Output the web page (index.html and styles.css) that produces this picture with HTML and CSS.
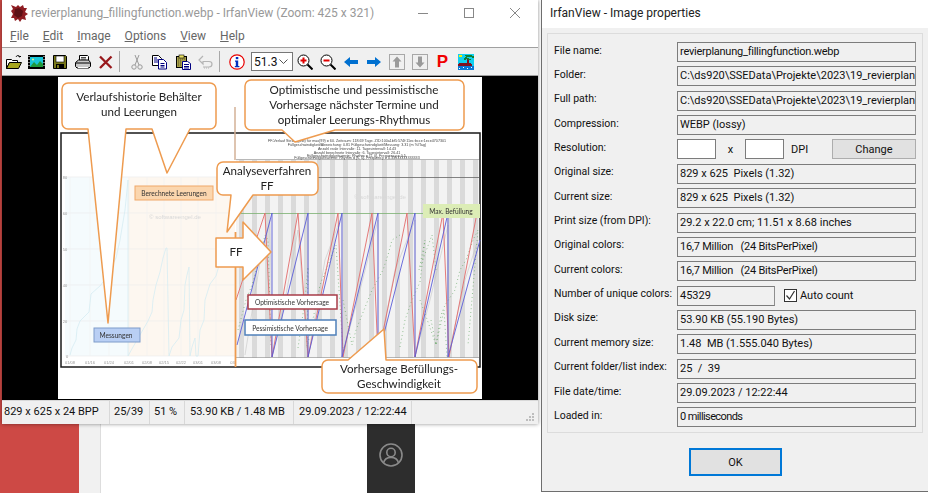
FILE: index.html
```html
<!DOCTYPE html>
<html lang="de">
<head>
  <meta charset="UTF-8">
  <title>IrfanView - Image properties</title>
  <link rel="stylesheet" href="styles.css">
</head>
<body>
  <div class="desktop">
    <div class="bg-red"></div>
    <div class="bg-gray"></div>
    <div class="bg-white">
      <div class="side-panel">
        <svg class="user-icon" width="24" height="24" viewBox="0 0 24 24" fill="none" stroke="#8a8a8a" stroke-width="1.6">
          <circle cx="12" cy="12" r="11"/>
          <circle cx="12" cy="9.5" r="4.2"/>
          <path d="M4.5 20c1-4 4-5.6 7.500-5.600s6.500 1.600 7.500 5.600"/>
        </svg>
        <svg class="user-icon" width="24" height="24" viewBox="0 0 24 24" fill="#8a8a8a">
          <circle cx="12" cy="6" r="4"/>
        </svg>
      </div>
    </div>

    <!-- viewer window -->
    <div class="window viewer">
      <div class="titlebar">
        <svg class="app-icon" width="18" height="18" viewBox="0 0 18 18">
          <path d="M1 1l5 2 2-2 2 2 3-2 1 3 3 0-2 4 3 2-3 2 1 4-4-1-2 3-2-3-3 2-1-3-3 0 2-4-2-3 2-2z" fill="#8e1c22"/>
          <path d="M5 5l4-1 4 3-1 5-4 2-4-3z" fill="#5c1015"/>
        </svg>
        <span class="title-text">revierplanung_fillingfunction.webp - IrfanView (Zoom: 425 x 321)</span>
        <div class="win-buttons">
          <svg width="46" height="16" viewBox="0 0 46 16"><path d="M18 8.500h10" stroke="#888"/></svg>
          <svg width="46" height="16" viewBox="0 0 46 16"><rect x="18.500" y="3.500" width="9" height="9" fill="none" stroke="#888"/></svg>
          <svg width="46" height="16" viewBox="0 0 46 16"><path d="M18 3l10 10M28 3l-10 10" stroke="#888"/></svg>
        </div>
      </div>
      <div class="menubar">
        <span class="menu-item"><u>F</u>ile</span>
        <span class="menu-item"><u>E</u>dit</span>
        <span class="menu-item"><u>I</u>mage</span>
        <span class="menu-item"><u>O</u>ptions</span>
        <span class="menu-item"><u>V</u>iew</span>
        <span class="menu-item"><u>H</u>elp</span>
      </div>
      <div class="toolbar">
        <span class="tool"><svg width="16" height="16" viewBox="0 0 16 16"><path d="M.5 5.500h5l1 1h5v2h-8l-3 6z" fill="#fff" stroke="#000"/><path d="M3.500 8.500h12l-3 6H.5z" fill="#a8a820" stroke="#000"/><path d="M10 3c1-2 3-2 4 0M14 3l1-1M14 3l-1.500-.5" fill="none" stroke="#000"/></svg></span>
        <span class="tool"><svg width="17" height="16" viewBox="0 0 17 16"><rect y="1" width="17" height="14" fill="#000"/><rect x="2" y="3" width="13" height="10" fill="#19c6d8"/><path d="M2 13l4-5 3 3 3-4 3 3v3z" fill="#1f9a3c"/><circle cx="5" cy="5.500" r="1" fill="#e8f080"/><path d="M1 2v12M16 2v12" stroke="#fff" stroke-dasharray="1 2"/></svg></span>
        <span class="tool"><svg width="16" height="16" viewBox="0 0 16 16"><path d="M1.500 1.500h12l1 1v12h-13z" fill="#7a7a1a" stroke="#000"/><rect x="4" y="2" width="8" height="6" fill="#fff" stroke="#000" stroke-width=".6"/><rect x="4" y="10" width="8" height="4.500" fill="#000"/><rect x="5" y="11" width="2" height="3" fill="#7a7a1a"/></svg></span>
        <span class="tool"><svg width="16" height="16" viewBox="0 0 16 16"><path d="M4.500 6.500v-5h8l1 1v4" fill="#fff" stroke="#000"/><path d="M.5 8.500l3-2.500h10l2 2.500v4l-1.500 1.500h-12l-1.500-1.500z" fill="#c8c8c8" stroke="#000"/><path d="M1 9h14" stroke="#000"/><path d="M3 13.500h10" stroke="#fff"/><path d="M6 3.500h5M6 5h5" stroke="#000" stroke-width=".7"/></svg></span>
        <span class="tool"><svg width="16" height="16" viewBox="0 0 16 16"><path d="M2 2.500l11.500 11.500M13.500 2.500l-11.500 11.500" stroke="#98181c" stroke-width="2.300"/></svg></span>
        <span class="tool-sep"></span>
        <span class="tool"><svg width="16" height="16" viewBox="0 0 16 16" fill="none" stroke="#9a9a9a"><circle cx="5" cy="13" r="2.200"/><circle cx="11" cy="13" r="2.200"/><path d="M6 11l4-10M10 11l-4-10"/></svg></span>
        <span class="tool"><svg width="16" height="16" viewBox="0 0 16 16"><path d="M.5 1.500h6l3 3v7h-9z" fill="#fff" stroke="#000"/><path d="M6.500 5.500h5l3 3v6.500h-8z" fill="#fff" stroke="#000080"/><path d="M8.500 9.500h4M8.500 11.500h4M8.500 13h4M2 4h3M2 6h4M2 8h4" stroke="#000080"/></svg></span>
        <span class="tool"><svg width="16" height="16" viewBox="0 0 16 16"><rect x="1.500" y="2.500" width="10" height="11" fill="#a8a04a" stroke="#000"/><rect x="4" y="1" width="5" height="3" fill="#e8e060" stroke="#000" stroke-width=".6"/><path d="M3 5h7M3 7h4M3 9h4M3 11h4" stroke="#5a5420" stroke-dasharray="1 1"/><path d="M7.500 7.500h5l3 2v6h-8z" fill="#fff" stroke="#000080"/><path d="M9 10.500h5M9 12.500h5M9 14h5" stroke="#000080"/></svg></span>
        <span class="tool"><svg width="16" height="16" viewBox="0 0 16 16" fill="none" stroke="#b4b4b4"><path d="M5 2L1 6l4 4V7.500h6c2 0 3 1 3 2.500s-1 3-3 3H5" stroke-width="1.200"/><path d="M6 14h6" stroke="#b4b4b4" stroke-dasharray="1 1"/></svg></span>
        <span class="tool-sep"></span>
        <span class="tool"><svg width="16" height="16" viewBox="0 0 16 16"><circle cx="8" cy="8" r="7.200" fill="#fff" stroke="#e80000" stroke-width="1.200"/><rect x="6.800" y="3" width="2.500" height="2.200" fill="#0030c0"/><path d="M6 6.500h3.200v5.500h1.200v1.200H5.800V12h1V7.700H6z" fill="#0030c0"/></svg></span>
        <span class="zoom-combo"><span>51.3</span>
          <svg width="9" height="6" viewBox="0 0 9 6"><path d="M.5 .5l4 4 4-4" fill="none" stroke="#555"/></svg>
        </span>
        <span class="tool"><svg width="16" height="16" viewBox="0 0 16 16"><circle cx="6.500" cy="6.500" r="5.500" fill="#fff" stroke="#000"/><path d="M3.500 6.500h6M6.500 3.500v6" stroke="#e00000" stroke-width="2"/><path d="M10.500 10.500l5 5" stroke="#000" stroke-width="2"/></svg></span>
        <span class="tool"><svg width="16" height="16" viewBox="0 0 16 16"><circle cx="6.500" cy="6.500" r="5.500" fill="#fff" stroke="#000"/><path d="M3.500 6.500h6" stroke="#e00000" stroke-width="2"/><path d="M10.500 10.500l5 5" stroke="#000" stroke-width="2"/></svg></span>
        <span class="tool"><svg width="16" height="16" viewBox="0 0 16 16"><path d="M1 8l6-5v3h8v4H7v3z" fill="#0070d0"/></svg></span>
        <span class="tool"><svg width="16" height="16" viewBox="0 0 16 16"><path d="M15 8L9 3v3H1v4h8v3z" fill="#0070d0"/></svg></span>
        <span class="tool"><svg width="16" height="16" viewBox="0 0 16 16"><rect x=".5" y=".5" width="15" height="15" fill="none" stroke="#a8a8a8"/><path d="M8 2.500l4.500 5H10v6H6v-6H3.500z" fill="#9a9a9a"/></svg></span>
        <span class="tool"><svg width="16" height="16" viewBox="0 0 16 16"><rect x=".5" y=".5" width="15" height="15" fill="none" stroke="#a8a8a8"/><path d="M8 13.500l4.500-5H10v-6H6v6H3.500z" fill="#9a9a9a"/></svg></span>
        <span class="tool tool-p">P</span>
        <span class="tool"><svg width="16" height="16" viewBox="0 0 16 16" shape-rendering="crispEdges"><rect width="16" height="12" fill="#10d0f0"/><rect y="12" width="16" height="4" fill="#0878d8"/><rect x="1" y="1" width="3" height="2" fill="#f8f000"/><path d="M1 9h12v1h1v2H0v-2h1zM9 4h2v5H9z" fill="#801020"/><path d="M7 1h7v1h2v2h-2V3H9v1h2v1h2v1h-3V5H8v1H6V4h1V3h1V2H7z" fill="#108030"/><path d="M1 14h1v1H1zM5 13h1v1H5zM9 14h1v1H9zM13 13h1v1h-1z" fill="#fff"/></svg></span>
      </div>

      <div class="image-area">
        <svg class="slide" width="424" height="322" viewBox="58 77 424 322">
          <defs>
            <pattern id="stripes" x="238" width="13" height="10" patternUnits="userSpaceOnUse">
              <rect width="13" height="10" fill="#f3f3f3"/>
              <rect x="1" width="5" height="10" fill="#dadada"/>
            </pattern>
          </defs>

          <!-- chart frame -->
          <rect x="61" y="133" width="419" height="234" fill="#fff" stroke="#1a1a1a" stroke-width="1.500"/>
          <rect x="65" y="177" width="63" height="179" fill="#f5fbfd"/>
          <rect x="128" y="177" width="107" height="179" fill="#fdf7f0"/>
          <path d="M65 177h170M65 213h170M65 249h170M65 285h170M65 321h170M65 356h170" stroke="#ececec" stroke-width=".7"/>
          <path d="M70 177v179M90 177v179M109 177v179M129 177v179M147 177v179M164 177v179M181 177v179M198 177v179M216 177v179" stroke="#f2f2f2" stroke-width=".6"/>
          <g class="axis-label">
            <text x="65" y="179">80</text><text x="65" y="215">60</text><text x="65" y="251">50</text><text x="65" y="287">40</text><text x="65" y="323">20</text><text x="67" y="358">0</text>
            <text x="70" y="364">01/08</text><text x="90" y="364">01/16</text><text x="109" y="364">01/24</text><text x="129" y="364">02/01</text><text x="147" y="364">02/08</text><text x="164" y="364">02/15</text><text x="181" y="364">02/22</text><text x="198" y="364">03/01</text><text x="216" y="364">03/08</text><text x="233" y="364">03/</text>
          </g>
          <polyline class="hist-line" points="70,355 72,348 76,340 77,329 80,321 89,312 91,294 101,285 106,277 116,258 120,240 125,210 128,180 128,356 133,347 148,321 152,312 153,300 156,285 160,272 163,258 166,248 167,248 169,356 172,347 179,338 181,320 184,310 185,285 187,275 189,267 190,356 192,347 195,338 196,356 198,356 200,330 204,320 205,300 210,284 216,276 220,262 228,250 233,240"/>

          <!-- right chart -->
          <rect x="236" y="160" width="243" height="198" fill="url(#stripes)"/>
          <path d="M236 159.500h243" stroke="#9a9a9a" stroke-width=".7"/>
          <path d="M236 177.500h243" stroke="#666" stroke-width=".8"/>
          <path d="M236 213.500h243" stroke="#7ab070" stroke-width=".8"/>
          <path d="M236 357.500h243" stroke="#999" stroke-width=".7"/>
          <g class="tiny-head">
            <text x="357" y="142">FF-Verlauf Stelle (gelb) für max(99) = 60. Zeitraum: 118.69 Tage. ZID:100a1bf5:574f:11ec:bcce:1ece4707301</text>
            <text x="357" y="146">Füllgeschwindigkeit/Abweichung: 0.81 Füllgeschwindigkeit/Messung: 3.31 (m %/Tag)</text>
            <text x="357" y="150">Anzahl reale Intervalle: 11. Tagesintervall: 14.43</text>
            <text x="357" y="153.500">Anzahl berechnete Intervalle: 6. Tagesintervall: 26.41</text>
            <text x="357" y="156.500">Füllgeschwindigkeitswerte: Rhythm = [1, 0]. Frequency = 0.5,</text>
            <text x="357" y="159">Füllgeschwindigkeitswerte: Rhythm = [1, 0]. Frequency = 0.33333333333333</text>
          </g>
          <text class="watermark" x="175" y="219">© softwareengel.de</text>
          <text class="watermark" x="380" y="199">© softwareengel.de</text>
          <g class="ghost-lines">
            <polyline points="245,355 262,250 270,220 272,357 285,300 298,230 308,357 325,260 342,215 342,357 360,290 378,220 378,357 395,270 415,220 415,357 430,300 448,225 448,357 465,280 478,240"/>
          </g>
          <g class="green-dots">
            <polyline points="238,330 246,300 252,285 259,260 265,235 268,240 271,345"/>
            <polyline points="298,348 305,300 308,267 307,348 320,285 326,270 336,245 343,350"/>
            <polyline points="343,300 352,345 356,330 368,300 372,290 383,270 388,255 392,240 400,235"/>
            <polyline points="400,347 405,320 412,300 420,282 425,240 419,270 432,235 436,270"/>
            <polyline points="431,320 436,345 441,315 445,305 455,290 460,270 466,260 473,240 478,230 468,345"/>
            <polyline points="420,300 428,322 436,345 444,310 447,357"/>
          </g>
          <path class="pred-red" d="M236 300L265 213L272 357L298 213L308 357L338 213L343 357L372 213L378 357L407 213L415 357L443 213L449 357L477 213"/>
          <path class="pred-blue" d="M237 345L272 213V357L308 213V357L342 213V357L378 213V357L415 213V357L448 213V357L480 240"/>

          <!-- boxes on the chart -->
          <rect x="135" y="186" width="78" height="14" fill="#fbd6ae" stroke="#f0a868"/>
          <text class="box-label" x="174" y="196">Berechnete Leerungen</text>
          <rect x="94" y="328" width="46" height="14" fill="#b9cff4" stroke="#7f9cca"/>
          <text class="box-label" x="116" y="338">Messungen</text>
          <rect x="423" y="204" width="57" height="14" fill="#dcedb6"/>
          <text class="box-label" x="451" y="214">Max. Befüllung</text>
          <rect x="248" y="295" width="89" height="14" fill="#fff" stroke="#a83c48" stroke-width="1.500"/>
          <text class="box-label" x="292" y="305">Optimistische Vorhersage</text>
          <rect x="245" y="320" width="91" height="15" fill="#fff" stroke="#4f80ba" stroke-width="1.500"/>
          <text class="box-label" x="290" y="331">Pessimistische Vorhersage</text>

          <!-- callouts -->
          <path class="axis-bar" d="M235 107V160"/>
          <path class="axis-bar-strong" d="M235.500 232V367"/>
          <path class="callout" d="M68 83H210a6 6 0 0 1 6 6V123a6 6 0 0 1-6 6H190L167 173L152 129H126L108 323L88 129H68a6 6 0 0 1-6-6V89a6 6 0 0 1 6-6z"/>
          <text class="callout-text" x="139" y="101">Verlaufshistorie Behälter</text>
          <text class="callout-text" x="139" y="116">und Leerungen</text>
          <path class="callout" d="M251 80H458a6 6 0 0 1 6 6V124a6 6 0 0 1-6 6H335L295 142L282 130H251a6 6 0 0 1-6-6V86a6 6 0 0 1 6-6z"/>
          <text class="callout-text" x="354" y="94">Optimistische und pessimistische</text>
          <text class="callout-text" x="354" y="109">Vorhersage nächster Termine und</text>
          <text class="callout-text" x="354" y="124">optimaler Leerungs-Rhythmus</text>
          <path class="callout" d="M223 162H312a6 6 0 0 1 6 6V189a6 6 0 0 1-6 6H253L227 232L231 195H223a6 6 0 0 1-6-6V168a6 6 0 0 1 6-6z"/>
          <text class="callout-text" x="267" y="175">Analyseverfahren</text>
          <text class="callout-text" x="267" y="190">FF</text>
          <path class="callout" d="M216 238H243V222L271 252L243 280V267H216z"/>
          <text class="callout-text" x="236" y="256">FF</text>
          <path class="callout" d="M328 360H348L384 329L386 360H471a6 6 0 0 1 6 6V387a6 6 0 0 1-6 6H328a6 6 0 0 1-6-6V366a6 6 0 0 1 6-6z"/>
          <text class="callout-text" x="399" y="373">Vorhersage Befüllungs-</text>
          <text class="callout-text" x="399" y="388">Geschwindigkeit</text>
        </svg>
      </div>

      <div class="statusbar">
        <span class="status-cell cell-size">829 x 625 x 24 BPP</span>
        <span class="status-cell cell-index">25/39</span>
        <span class="status-cell cell-zoom">51 %</span>
        <span class="status-cell cell-mem">53.90 KB / 1.48 MB</span>
        <span class="status-cell cell-date">29.09.2023 / 12:22:44</span>
        <svg class="grip" width="9" height="9" viewBox="0 0 9 9" fill="#bdbdbd"><rect x="6" width="2" height="2"/><rect x="3" y="3" width="2" height="2"/><rect x="6" y="3" width="2" height="2"/><rect y="6" width="2" height="2"/><rect x="3" y="6" width="2" height="2"/><rect x="6" y="6" width="2" height="2"/></svg>
      </div>
    </div>

    <!-- properties dialog -->
    <div class="window dialog">
      <div class="dialog-title">IrfanView - Image properties</div>
      <div class="dialog-body">
        <div class="group">
          <div class="row"><span class="label">File name:</span><span class="field tight">revierplanung_fillingfunction.webp</span></div>
          <div class="row"><span class="label">Folder:</span><span class="field">C:\ds920\SSEData\Projekte\2023\19_revierplan</span></div>
          <div class="row"><span class="label">Full path:</span><span class="field">C:\ds920\SSEData\Projekte\2023\19_revierplan</span></div>
          <div class="row"><span class="label">Compression:</span><span class="field">WEBP (lossy)</span></div>
          <div class="row">
            <span class="label">Resolution:</span>
            <span class="input"></span><span class="times">x</span><span class="input"></span><span class="dpi">DPI</span>
            <span class="btn btn-change">Change</span>
          </div>
          <div class="row"><span class="label">Original size:</span><span class="field">829 x 625&nbsp; Pixels (1.32)</span></div>
          <div class="row"><span class="label">Current size:</span><span class="field">829 x 625&nbsp; Pixels (1.32)</span></div>
          <div class="row"><span class="label">Print size (from DPI):</span><span class="field">29.2 x 22.0 cm; 11.51 x 8.68 inches</span></div>
          <div class="row"><span class="label">Original colors:</span><span class="field tight">16,7 Million&nbsp;&nbsp; (24 BitsPerPixel)</span></div>
          <div class="row"><span class="label">Current colors:</span><span class="field tight">16,7 Million&nbsp;&nbsp; (24 BitsPerPixel)</span></div>
          <div class="row">
            <span class="label">Number of unique colors:</span>
            <span class="field field-short">45329</span>
            <span class="check"><svg width="11" height="11" viewBox="0 0 11 11"><path d="M1.500 5.500l3 3.500 5-8" fill="none" stroke="#333" stroke-width="1.200"/></svg></span>
            <span class="check-label">Auto count</span>
          </div>
          <div class="row"><span class="label">Disk size:</span><span class="field">53.90 KB (55.190 Bytes)</span></div>
          <div class="row"><span class="label">Current memory size:</span><span class="field">1.48&nbsp; MB (1.555.040 Bytes)</span></div>
          <div class="row"><span class="label">Current folder/list index:</span><span class="field">25&nbsp; /&nbsp; 39</span></div>
          <div class="row"><span class="label">File date/time:</span><span class="field">29.09.2023 / 12:22:44</span></div>
          <div class="row"><span class="label">Loaded in:</span><span class="field tighter">0 milliseconds</span></div>
        </div>
        <div class="dialog-actions"><span class="btn btn-ok">OK</span></div>
      </div>
    </div>
  </div>
</body>
</html>
```

FILE: styles.css
```css
html, body {
  margin: 0;
  height: 100%;
  overflow: hidden;
}
body {
  font-family: Roboto, Arial, sans-serif;
  font-size: 11px;
  color: #111;
  background-color: #fff;
}
.desktop {
  position: relative;
  display: flex;
  width: 928px;
  height: 493px;
  overflow: hidden;
}
.bg-red {
  width: 79px;
  background-color: #cd4945;
}
.bg-gray {
  width: 21px;
  background-color: #f1f1f1;
  border-right: 1px solid #ddd;
}
.bg-white {
  flex: 1;
  padding-left: 266px;
  background-color: #fff;
}
.side-panel {
  display: flex;
  flex-direction: column;
  align-items: center;
  gap: 24px;
  width: 48px;
  height: 100%;
  padding-top: 443px;
  box-sizing: border-box;
  background-color: #2d2d2d;
}
.user-icon {
  flex: none;
}

.window {
  position: absolute;
  top: 0;
  box-sizing: border-box;
  display: flex;
  flex-direction: column;
}

/* viewer */
.viewer {
  left: 2px;
  width: 536px;
  height: 424px;
  background-color: #fff;
  box-shadow: 0 0 4px rgba(0, 0, 0, 0.45);
}
.titlebar {
  display: flex;
  align-items: center;
  height: 25px;
  padding-left: 8px;
}
.app-icon {
  margin-right: 3px;
}
.title-text {
  font-size: 12px;
  color: #999;
  white-space: nowrap;
}
.win-buttons {
  display: flex;
  margin-left: auto;
}
.menubar {
  display: flex;
  align-items: center;
  height: 22px;
  padding-left: 8px;
  font-size: 12px;
  color: #666;
}
.menu-item {
  margin-right: 14px;
}
.toolbar {
  display: flex;
  align-items: center;
  height: 29px;
  box-sizing: border-box;
  background-color: #f0f0f0;
  border-top: 1px solid #a0a0a0;
  border-bottom: 1px solid #a0a0a0;
}
.tool {
  display: flex;
  justify-content: center;
  width: 23px;
  flex-shrink: 0;
}
.tool-p {
  font-family: "Liberation Sans", sans-serif;
  font-size: 17px;
  font-weight: bold;
  line-height: 16px;
  color: #f00000;
}
.tool-sep {
  width: 1px;
  height: 21px;
  margin: 0 5px 0 2px;
  background-color: #a8a8a8;
}
.zoom-combo {
  display: flex;
  align-items: center;
  justify-content: space-between;
  box-sizing: border-box;
  width: 42px;
  height: 19px;
  margin-left: 3px;
  padding: 0 4px 0 2px;
  font-size: 12px;
  background-color: #fff;
  border: 1px solid #777;
}
.image-area {
  display: flex;
  justify-content: center;
  height: 324px;
  padding-top: 1px;
  box-sizing: border-box;
  background-color: #000;
}
.slide {
  display: block;
  background-color: #fff;
  filter: blur(0.5px);
}
.statusbar {
  display: flex;
  align-items: center;
  position: relative;
  flex: 1;
  font-size: 11px;
  color: #111;
  background-color: #f0f0f0;
  border-top: 1px solid #d8d8d8;
}
.status-cell {
  box-sizing: border-box;
  height: 100%;
  line-height: 22px;
  padding-left: 2px;
  border-right: 1px solid #d8d8d8;
  white-space: nowrap;
}
.cell-size { width: 108px; }
.cell-index { width: 40px; padding-left: 4px; }
.cell-zoom { width: 35px; padding-left: 4px; }
.cell-mem { width: 109px; padding-left: 5px; }
.cell-date { width: 118px; padding-left: 5px; }
.grip {
  position: absolute;
  right: 3px;
  bottom: 2px;
}

/* slide contents */
.callout {
  fill: #fff;
  stroke: #ee9b4f;
  stroke-width: 1.500;
  stroke-linejoin: round;
}
.callout-text {
  font-family: Lato, sans-serif;
  font-size: 11.600px;
  fill: #222;
  text-anchor: middle;
}
.box-label {
  font-family: Lato, sans-serif;
  font-size: 6.600px;
  fill: #333;
  text-anchor: middle;
}
.axis-label {
  font-family: "Liberation Sans", sans-serif;
  font-size: 4px;
  fill: #999;
  text-anchor: middle;
}
.tiny-head {
  font-family: "Liberation Sans", sans-serif;
  font-size: 3.700px;
  fill: #444;
  text-anchor: middle;
}
.watermark {
  font-family: "Liberation Sans", sans-serif;
  font-size: 6px;
  fill: #d8d8d8;
  text-anchor: middle;
}
.hist-line {
  fill: none;
  stroke: #d5ecf2;
  stroke-width: 0.800;
}
.ghost-lines polyline {
  fill: none;
  stroke: #bdbdbd;
  stroke-width: 0.500;
}
.green-dots polyline {
  fill: none;
  stroke: #4c9a4c;
  stroke-width: 0.700;
  stroke-dasharray: 0.800 3;
}
.pred-red {
  fill: none;
  stroke: #e26c6c;
  stroke-width: 0.900;
}
.pred-blue {
  fill: none;
  stroke: #5a5cd8;
  stroke-width: 0.900;
}
.axis-bar {
  fill: none;
  stroke: #d3b196;
  stroke-width: 1.500;
}
.axis-bar-strong {
  fill: none;
  stroke: #ee9b4f;
  stroke-width: 1.800;
}

/* dialog */
.dialog {
  left: 541px;
  width: 390px;
  height: 492px;
  background-color: #f0f0f0;
  border-left: 1px solid #6e6e6e;
  border-bottom: 1px solid #6e6e6e;
}
.dialog-title {
  height: 28px;
  line-height: 27px;
  padding-left: 8px;
  font-size: 12px;
  color: #222;
  background-color: #fff;
}
.dialog-body {
  padding: 5px 0 0 5px;
}
.group {
  display: flex;
  flex-direction: column;
  gap: 4.370px;
  box-sizing: border-box;
  width: 376px;
  height: 400px;
  padding: 8px 6px 0 6px;
  border: 1px solid #dcdcdc;
}
.row {
  display: flex;
  align-items: center;
  height: 20px;
  flex-shrink: 0;
}
.label {
  flex: none;
  width: 123px;
  margin-bottom: 4px;
  font-size: 10.500px;
  white-space: nowrap;
}
.field {
  flex: 1;
  box-sizing: border-box;
  min-width: 0;
  height: 20px;
  line-height: 18px;
  padding-left: 2px;
  white-space: nowrap;
  border: 1px solid #7c7c7c;
  border-right-color: #8e8e8e;
}
.tight {
  letter-spacing: -0.25px;
}
.tighter {
  letter-spacing: -0.6px;
}
.field-short {
  flex: none;
  width: 98px;
}
.input {
  box-sizing: border-box;
  width: 39px;
  height: 20px;
  background-color: #fff;
  border: 1px solid #7c7c7c;
}
.times {
  width: 29px;
  text-align: center;
}
.dpi {
  margin-left: 7px;
}
.btn {
  display: flex;
  align-items: center;
  justify-content: center;
  box-sizing: border-box;
  background-color: #e1e1e1;
  border: 1px solid #adadad;
}
.btn-change {
  width: 84px;
  height: 20px;
  margin-left: auto;
}
.check {
  display: flex;
  align-items: center;
  justify-content: center;
  box-sizing: border-box;
  width: 13px;
  height: 13px;
  margin-left: 9px;
  background-color: #fff;
  border: 1px solid #333;
}
.check-label {
  margin-left: 3px;
}
.dialog-actions {
  display: flex;
  padding: 15px 0 0 142px;
}
.btn-ok {
  width: 93px;
  height: 28px;
  border: 2px solid #0078d7;
}
```
